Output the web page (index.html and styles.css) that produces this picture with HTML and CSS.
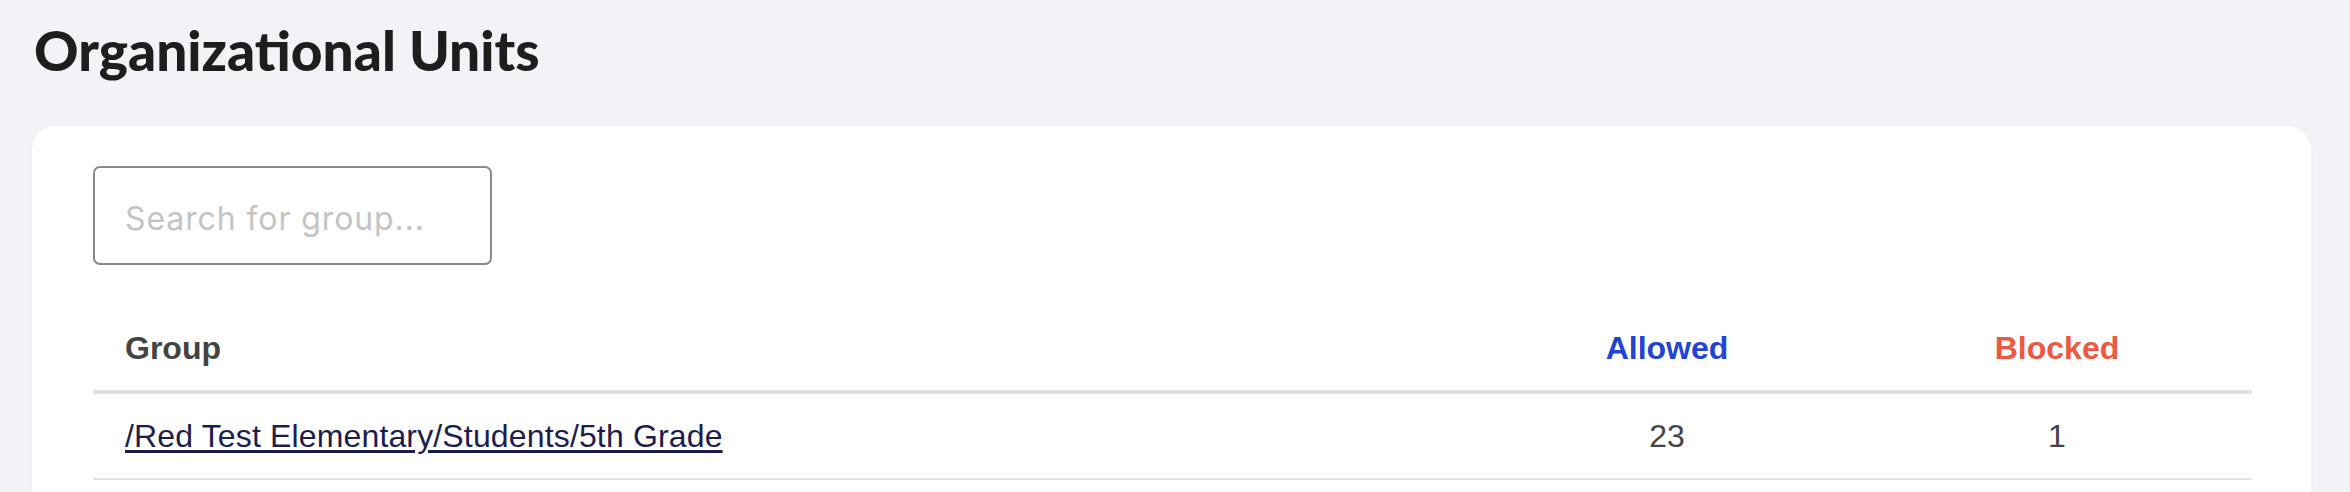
FILE: index.html
```html
<!DOCTYPE html>
<html lang="en">
<head>
  <meta charset="UTF-8">
  <meta name="viewport" content="width=device-width, initial-scale=1.0">
  <title>Organizational Units</title>
  <link rel="stylesheet" href="styles.css">
</head>
<body>

  <h1 class="page-title">Organizational Units</h1>

  <div class="card">
    <input type="text" class="search" placeholder="Search for group...">

    <table class="groups">
      <thead>
        <tr>
          <th class="col-group">Group</th>
          <th class="col-num allowed">Allowed</th>
          <th class="col-num blocked">Blocked</th>
        </tr>
      </thead>
      <tbody>
        <tr>
          <td><a href="#">/Red Test Elementary/Students/5th Grade</a></td>
          <td class="num">23</td>
          <td class="num">1</td>
        </tr>
      </tbody>
    </table>
  </div>

</body>
</html>
```

FILE: styles.css
```css
* {
  box-sizing: border-box;
}
body {
  margin: 0;
  padding: 18px 39px 0 32px;
  background-color: #f2f3f7;
  font-family: 'Liberation Sans', Arial, sans-serif;
  color: #444;
}
.page-title {
  margin: 0 0 43px 2px;
  font-family: 'Lato', 'Liberation Sans', sans-serif;
  font-weight: 900;
  font-size: 55px;
  line-height: 65px;
  color: #1e1e1e;
}
.card {
  background-color: #fff;
  border-radius: 24px;
  padding: 40px 59px 40px 61px;
  box-shadow: 0 2px 6px rgba(0, 0, 0, 0.04);
  min-height: 400px;
}
.search {
  display: block;
  width: 399px;
  height: 99px;
  padding: 6px 30px 0;
  font-family: 'Inter', 'Liberation Sans', sans-serif;
  font-size: 32px;
  letter-spacing: 0.9px;
  color: #333;
  border: 2px solid #8a8a8a;
  border-radius: 7px;
  outline: none;
}
.search::placeholder {
  color: #c4c4c4;
}
.groups {
  width: 100%;
  margin-top: 41px;
  border-collapse: collapse;
  font-size: 32px;
}
.groups th,
.groups td {
  padding: 24px 32px;
  line-height: 36px;
  text-align: left;
}
.groups th {
  font-weight: bold;
  color: #444;
  border-bottom: 4px solid #e2e2e2;
}
.groups td {
  border-bottom: 2px solid #e3e3e3;
}
.groups .col-num,
.groups .num {
  width: 390px;
  text-align: center;
}
.allowed {
  color: #1f44d6 !important;
}
.blocked {
  color: #ee5740 !important;
}
.groups a {
  color: #1b1d4f;
  letter-spacing: 0.15px;
  text-decoration: underline;
  text-underline-offset: 3px;
}
.num {
  color: #444;
}
```
